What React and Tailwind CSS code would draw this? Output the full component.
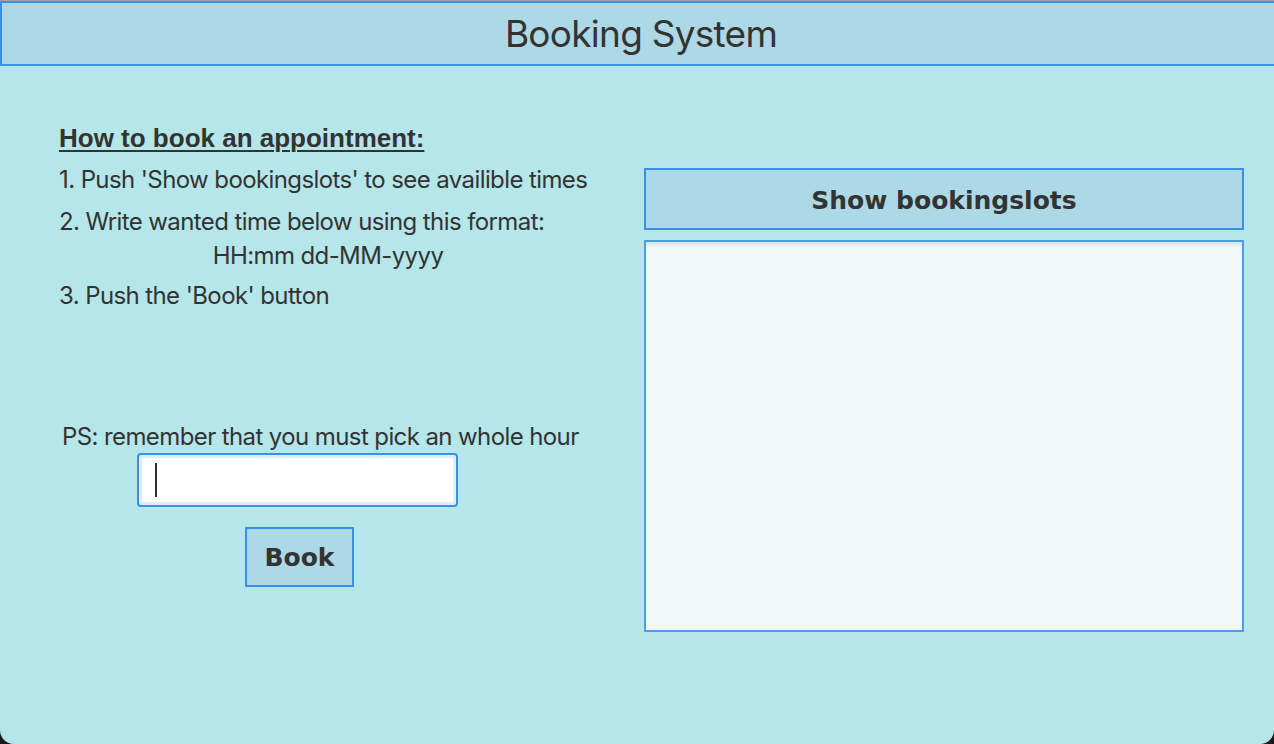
export default function App() {
  const sf = { fontFamily: "Inter, 'Noto Sans', sans-serif" };
  const heavy = { fontFamily: "'DejaVu Sans', 'Liberation Sans', sans-serif" };
  return (
    <div className="w-[1274px] h-[744px] bg-[#1a1a1a] overflow-hidden">
      <div className="h-full flex flex-col bg-[#b5e6ea] rounded-b-[14px] text-[#333333]">
        <div className="pt-px bg-[#9aa6ad]">
          <div
            className="h-[65px] flex items-center justify-center pl-[6px] bg-[#add8e6] border-t-2 border-l-2 border-b-2 border-[#3b8fe9] text-[37px] tracking-[-0.02em]"
            style={sf}
          >
            Booking System
          </div>
        </div>
        <div className="flex">
          <div className="w-[644px] flex flex-col pt-[57px]" style={sf}>
            <div
              className="ml-[59px] text-[26px] leading-[30px] font-bold underline decoration-2 underline-offset-[3px]"
              style={{ fontFamily: "'Liberation Sans', Arial, sans-serif" }}
            >
              How to book an appointment:
            </div>
            <div className="ml-[59px] mt-[10px] text-[24px] leading-[34px] tracking-[-0.025em]">
              1. Push 'Show bookingslots' to see availible times
            </div>
            <div className="ml-[59px] mt-[8px] text-[24px] leading-[34px] tracking-[-0.025em]">
              2. Write wanted time below using this format:
            </div>
            <div className="ml-[59px] w-[538px] text-center text-[24px] leading-[34px] tracking-[-0.025em]">
              HH:mm dd-MM-yyyy
            </div>
            <div className="ml-[59px] mt-[6px] text-[24px] leading-[34px] tracking-[-0.025em]">
              3. Push the 'Book' button
            </div>
            <div className="ml-[62px] mt-[109px] text-[24px] leading-[30px] tracking-[-0.025em]">
              PS: remember that you must pick an whole hour
            </div>
            <div className="ml-[137px] mt-px w-[321px] h-[54px] rounded-[4px] border-2 border-[#3b8fe9] bg-white shadow-[inset_0_0_0_3px_#ddf0f7] flex items-center pl-[16px]">
              <div className="w-[2px] h-[34px] bg-[#333333]" />
            </div>
            <div
              className="ml-[245px] mt-[20px] w-[109px] h-[60px] border-2 border-[#3b8fe9] bg-[#add8e6] flex items-center justify-center pt-[2px] text-[25px] font-bold"
              style={heavy}
            >
              Book
            </div>
          </div>
          <div className="w-[600px] flex flex-col pt-[102px] gap-[10px]">
            <div
              className="h-[62px] border-2 border-[#3b8fe9] bg-[#add8e6] flex items-center justify-center pt-[3px] text-[25px] font-bold"
              style={heavy}
            >
              Show bookingslots
            </div>
            <div className="h-[392px] border-2 border-[#4b9eea] bg-[#f0f8fa] shadow-[inset_0_4px_4px_-2px_rgba(0,0,0,0.12)]" />
          </div>
        </div>
      </div>
    </div>
  );
}
